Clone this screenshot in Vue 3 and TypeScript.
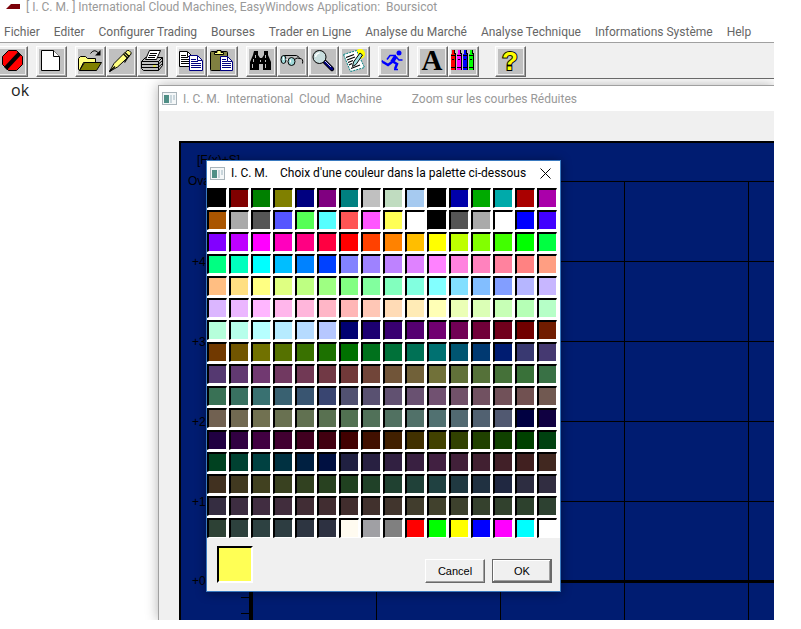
<script setup lang="ts">
import { ref } from 'vue'

const menus: string[] = [
  'Fichier',
  'Editer',
  'Configurer Trading',
  'Bourses',
  'Trader en Ligne',
  'Analyse du Marché',
  'Analyse Technique',
  'Informations Système',
  'Help',
]

interface Tool {
  id: string
  label: string
}

const toolGroups: Tool[][] = [
  [{ id: 'stop', label: 'Stop' }],
  [{ id: 'new', label: 'Nouveau' }],
  [
    { id: 'open', label: 'Ouvrir' },
    { id: 'pen', label: 'Editer' },
    { id: 'print', label: 'Imprimer' },
  ],
  [
    { id: 'copy', label: 'Copier' },
    { id: 'paste', label: 'Coller' },
  ],
  [
    { id: 'find', label: 'Rechercher' },
    { id: 'glasses', label: 'Lire' },
    { id: 'zoom', label: 'Zoom' },
    { id: 'note', label: 'Notes' },
  ],
  [{ id: 'run', label: 'Lancer' }],
  [
    { id: 'font', label: 'Police' },
    { id: 'colors', label: 'Couleurs' },
  ],
  [{ id: 'help', label: 'Aide' }],
]

const palette: string[] = `
000000 800000 008000 808000 000080 800080 008080 c0c0c0 c0dcc0 a6caf0 000000 0000aa 00aa00 00aaaa aa0000 aa00aa
aa5500 aaaaaa 555555 5555ff 55ff55 55ffff ff5555 ff55ff ffff55 ffffff 000000 555555 aaaaaa ffffff 0000ff 4100ff
8200ff be00ff ff00ff ff00be ff0082 ff0041 ff0000 ff4100 ff8200 ffbe00 ffff00 beff00 82ff00 41ff00 00ff00 00ff41
00ff82 00ffbe 00ffff 00beff 0082ff 0041ff 8282ff 9e82ff be82ff df82ff ff82ff ff82df ff82be ff829e ff8282 ff9e82
ffbe82 ffdf82 ffff82 dfff82 beff82 9eff82 82ff82 82ff9e 82ffbe 82ffdf 82ffff 82dfff 82beff 829eff b6b6ff c7b6ff
dbb6ff ebb6ff ffb6ff ffb6eb ffb6db ffb6c7 ffb6b6 ffc7b6 ffdbb6 ffebb6 ffffb6 ebffb6 dbffb6 c7ffb6 b6ffb6 b6ffc7
b6ffdb b6ffeb b6ffff b6ebff b6dbff b6c7ff 000071 1c0071 390071 550071 710071 710055 710039 71001c 710000 711c00
713900 715500 717100 557100 397100 1c7100 007100 00711c 007139 007155 007171 005571 003971 001c71 393971 453971
553971 613971 713971 713961 713955 713945 713939 714539 715539 716139 717139 617139 557139 457139 397139 397145
397155 397161 397171 396171 395571 394571 515171 595171 615171 695171 715171 715169 715161 715159 715151 715951
716151 716951 717151 697151 617151 597151 517151 517159 517161 517169 517171 516971 516171 515971 000041 100041
200041 310041 410041 410031 410020 410010 410000 411000 412000 413100 414100 314100 204100 104100 004100 004110
004120 004131 004141 003141 002041 001041 202041 282041 312041 392041 412041 412039 412031 412028 412020 412820
413120 413920 414120 394120 314120 284120 204120 204128 204131 204139 204141 203941 203141 202841 2d2d41 312d41
352d41 3d2d41 412d41 412d3d 412d35 412d31 412d2d 41312d 41352d 413d2d 41412d 3d412d 35412d 31412d 2d412d 2d4131
2d4135 2d413d 2d4141 2d3d41 2d3541 2d3141 fffbf0 a0a0a4 808080 ff0000 00ff00 ffff00 0000ff ff00ff 00ffff ffffff
`
  .trim()
  .split(/\s+/)
  .map((hex) => `#${hex}`)

const selected = ref('#ffff55')
const dialogOpen = ref(true)

const rowStep = 80
const columnStep = 124
const rows = [4, 3, 2, 1]
const columns = Array.from({ length: 16 }, (_, i) => 195 + i * columnStep)
const crayons = [
  { x: 0, fill: '#ff0000' },
  { x: 6, fill: '#ff00ff' },
  { x: 12, fill: '#0000ff' },
  { x: 18, fill: '#00ff00' },
]
</script>

<template>
  <div class="page">
    <main class="app">
      <header class="app-title">
        <svg class="app-logo" width="16" height="8" viewBox="0 0 16 8" aria-hidden="true">
          <path d="M0 6 L5 1 H14 V6 Z" fill="#7b0008" />
        </svg>
        <h1>[ I. C. M. ] International Cloud Machines, EasyWindows Application:&nbsp; Boursicot</h1>
      </header>

      <nav class="menu">
        <button v-for="menu in menus" :key="menu" type="button">{{ menu }}</button>
      </nav>

      <div class="toolbar" role="toolbar">
        <div v-for="(group, g) in toolGroups" :key="g" class="tool-group">
          <button v-for="tool in group" :key="tool.id" type="button" class="tool" :aria-label="tool.label">
            <svg width="25" height="25" viewBox="0 0 25 25" aria-hidden="true">
              <g v-if="tool.id === 'stop'">
                <path d="M8.500 1.500 H16.500 L22.500 7.500 V15.500 L16.500 21.500 H8.500 L2.500 15.500 V7.500 Z" fill="#f00" stroke="#000" />
                <path d="M4 18 L18 3 L21 6 L7 21 Z" fill="#000" />
              </g>
              <g v-else-if="tool.id === 'new'">
                <path d="M2.500 1.500 H14.500 L20.500 7.500 V21.500 H2.500 Z" fill="#fff" stroke="#000" />
                <path d="M14.500 1.500 V7.500 H20.500" fill="#fff" stroke="#000" />
              </g>
              <g v-else-if="tool.id === 'open'">
                <path d="M0.500 20.500 V9.500 L2.500 7.500 H7.500 L9.500 9.500 H17.500 V13.500 L5.500 13.500 L1.500 21.500 Z" fill="#ffff80" stroke="#000" />
                <path d="M1.500 21.500 L6.500 13.500 H23.500 L18.500 21.500 Z" fill="#808000" stroke="#000" />
                <path d="M12.500 4.500 Q16 -0.500 20 3.500" fill="none" stroke="#000" />
                <path d="M22.500 1 V6.500 H17 Z" fill="#000" />
              </g>
              <g v-else-if="tool.id === 'pen'">
                <path d="M0.500 22.500 L5 14.500 L17 2.500 Q18.500 1 20 1.500 L22 3.500 Q22.500 5 21 6.500 L8.500 18 Z" fill="#ffff80" stroke="#000" />
                <path d="M14.500 5 L18.500 9 M16 3.500 L20 7.500 M0.500 22.500 L6 17.500 M20.500 6 L15.500 13.500" stroke="#000" stroke-width="1.300" fill="none" />
              </g>
              <g v-else-if="tool.id === 'print'">
                <path d="M1.500 12.500 L5.500 8.500 H22.500 V16.500 L18.500 21.500 H3.500 L1.500 19.500 Z" fill="#c0c0c0" stroke="#000" />
                <path d="M5.500 10.500 L9.500 1.500 H20.500 L16.500 10.500 Z" fill="#fff" stroke="#000" />
                <path d="M10 4.500 H17 M9 6.500 H16 M8 8.500 H15 M1.500 12.500 H18.500 L22.500 8.500 M18.500 12.500 V21.500 M2 15.500 H18 L22.500 11.500 M2 18.500 H18 L22.500 14.500" fill="none" stroke="#000" />
                <path d="M13 17 H16" stroke="#ff0" />
              </g>
              <g v-else-if="tool.id === 'copy'">
                <path d="M0.500 2.500 H8.500 L13.500 7.500 V17.500 H0.500 Z" fill="#fff" stroke="#000" />
                <path d="M2 6.500 H7 M2 8.500 H9 M2 10.500 H11 M2 12.500 H11 M2 14.500 H11 M8.500 3 V7.500 H13" fill="none" stroke="#000" />
                <path d="M10.500 6.500 H18.500 L23.500 11.500 V21.500 H10.500 Z" fill="#fff" stroke="#000080" />
                <path d="M12 10.500 H17 M12 12.500 H19 M12 14.500 H22 M12 16.500 H22 M12 18.500 H22 M18.500 7 V11.500 H23" fill="none" stroke="#000080" />
              </g>
              <g v-else-if="tool.id === 'paste'">
                <rect x="0.500" y="2.500" width="17" height="19" rx="1" fill="#808040" stroke="#000" />
                <path d="M4.500 5.500 V3.500 H7 V1.500 H11 V3.500 H13.500 V5.500 Z" fill="#ffff80" stroke="#000" />
                <path d="M10.500 7.500 H17.500 L22.500 12.500 V21.500 H10.500 Z" fill="#fff" stroke="#000080" />
                <path d="M12 10.500 H16 M12 12.500 H17 M12 14.500 H21 M12 16.500 H21 M12 18.500 H21 M17.500 8 V12.500 H22" fill="none" stroke="#000080" />
              </g>
              <g v-else-if="tool.id === 'find'">
                <path d="M5 2 H9 V6 L11 9 H13 L15 6 V2 H19 V6 L22 13 V21 H14 V15 H10 V21 H1 V13 L4 6 Z" fill="#000" />
                <path d="M6.500 6 V9 M4.500 10 V13 M3.500 15 V19 M16.500 6 V9 M16.500 11 V13 M16.500 15 V19 M11.500 11 V13" stroke="#c0c0c0" />
              </g>
              <g v-else-if="tool.id === 'glasses'">
                <path d="M3.500 6.500 H16.500 L19.500 8.500 M14.500 10.500 Q17 8 20 9.500 Q23.500 9.500 22.500 14.500" fill="none" stroke="#000" />
                <ellipse cx="3.500" cy="10.500" rx="2.500" ry="4" fill="#9fd8d8" stroke="#000" />
                <ellipse cx="11.500" cy="12.500" rx="3.500" ry="4" fill="#9fd8d8" stroke="#000" />
                <path d="M6 10 L8 11 M3.500 8 V11 M10.500 10.500 V13.500" stroke="#fff" />
              </g>
              <g v-else-if="tool.id === 'zoom'">
                <path d="M13 12 L21 20" stroke="#000" stroke-width="4.500" stroke-linecap="round" />
                <path d="M14 13 L21 20" stroke="#000080" stroke-width="2.500" stroke-linecap="round" />
                <path d="M14 12 L20 18" stroke="#fff" stroke-width="0.800" />
                <circle cx="8.500" cy="8" r="6.500" fill="#c8dede" stroke="#000" />
                <path d="M4.500 8 Q5 4.500 8.500 4" fill="none" stroke="#fff" stroke-width="1.500" />
              </g>
              <g v-else-if="tool.id === 'note'">
                <circle cx="18" cy="5" r="5" fill="#ff0" />
                <path d="M1.500 5.500 L14.500 1.500 L22.500 18.500 L8.500 22.500 Z" fill="#fff" stroke="#008080" stroke-dasharray="2 1" />
                <path d="M4 8.500 L12 5.500 M5 11 L13 8 M6 13.500 L11 11.500 M7 16 L10 14.500 M9 19.500 L18 16" stroke="#000" stroke-width="1.200" />
                <path d="M17 1 L20 0.500 Q23 2 22.500 6 L19 9 L16 5 Z" fill="#ff0" />
                <path d="M10.500 17.500 L11.500 13 L18 4 L20.500 6 L14 15.500 Z" fill="#a0e0e0" stroke="#000" />
              </g>
              <g v-else-if="tool.id === 'run'" fill="none" stroke="#00f">
                <circle cx="18" cy="4" r="2.500" fill="#00f" stroke="none" />
                <path d="M15 7 L11 13" stroke-width="4" />
                <path d="M11 13 L7 16 L2 13 M11 12 L16 15 L14 20" stroke-width="2.500" />
                <path d="M15 6.500 H9 L6 10.500 M15 8 L18 11 H21.500 M2.500 14 L1 11.500 M13 20.500 L17 20.500" stroke-width="1.500" />
              </g>
              <text v-else-if="tool.id === 'font'" class="glyph-font" x="12" y="21" text-anchor="middle">A</text>
              <g v-else-if="tool.id === 'colors'">
                <g v-for="crayon in crayons" :key="crayon.x">
                  <path :d="`M${crayon.x + 1} 1 H${crayon.x + 4} V4 H${crayon.x + 5} V21 H${crayon.x + 1} Z`" fill="#000" />
                  <path :d="`M${crayon.x} 5 H${crayon.x + 4} V21 H${crayon.x} Z M${crayon.x + 1} 1 H${crayon.x + 3} V5 H${crayon.x + 1} Z`" :fill="crayon.fill" />
                  <path :d="`M${crayon.x} 6.500 H${crayon.x + 4} M${crayon.x + 1} 10.500 H${crayon.x + 3} M${crayon.x} 18.500 H${crayon.x + 4}`" stroke="#000" />
                </g>
              </g>
              <text v-else class="glyph-help" x="12" y="21" text-anchor="middle">?</text>
            </svg>
          </button>
        </div>
      </div>

      <div class="workspace">
        <p class="console">ok</p>

        <section class="child">
          <header class="child-title">
            <svg width="15" height="13" viewBox="0 0 15 13" aria-hidden="true">
              <rect x="0.500" y="0.500" width="14" height="12" fill="#f4f7f8" stroke="#a9b4ba" />
              <rect x="2" y="3" width="5" height="8" fill="#4f8f86" />
              <rect x="8" y="3" width="2" height="8" fill="#c9d6dc" />
              <rect x="11" y="3" width="2" height="5" fill="#c9d6dc" />
            </svg>
            <h2>I. C. M.&nbsp; International&nbsp; Cloud&nbsp; Machine</h2>
            <h2 class="child-subtitle">Zoom sur les courbes Réduites</h2>
          </header>

          <div class="chart">
            <svg class="plot" aria-hidden="true">
              <text x="16" y="21">[F(x)+S]</text>
              <text x="7" y="42">Oval</text>
              <line x1="68" x2="100%" y1="38.500" y2="38.500" />
              <g v-for="(row, i) in rows" :key="row">
                <line x1="68" x2="100%" :y1="118.5 + i * rowStep" :y2="118.5 + i * rowStep" />
                <text x="11" :y="123 + i * rowStep">+{{ row }}</text>
              </g>
              <text x="11" y="442">+0</text>
              <line v-for="x in columns" :key="x" :x1="x + 0.5" :x2="x + 0.5" y1="38" y2="100%" />
              <line x1="68" x2="100%" y1="438.500" y2="438.500" stroke-width="3" />
              <line x1="70" x2="70" y1="38" y2="100%" stroke-width="4" />
              <line x1="60" x2="68" y1="454.500" y2="454.500" />
              <line x1="60" x2="68" y1="470.500" y2="470.500" />
            </svg>
          </div>

          <div v-if="dialogOpen" class="dialog" role="dialog" aria-labelledby="dialog-title">
            <header class="dialog-title">
              <svg width="15" height="13" viewBox="0 0 15 13" aria-hidden="true">
                <rect x="0.500" y="0.500" width="14" height="12" fill="#f4f7f8" stroke="#a9b4ba" />
                <rect x="2" y="3" width="5" height="8" fill="#4f8f86" />
                <rect x="8" y="3" width="2" height="8" fill="#c9d6dc" />
                <rect x="11" y="3" width="2" height="5" fill="#c9d6dc" />
              </svg>
              <span>I. C. M.</span>
              <h2 id="dialog-title">Choix d'une couleur dans la palette ci-dessous</h2>
              <button type="button" class="close" aria-label="Fermer" @click="dialogOpen = false">
                <svg width="11" height="11" viewBox="0 0 11 11" aria-hidden="true">
                  <path d="M0.500 0.500 L10.500 10.500 M10.500 0.500 L0.500 10.500" stroke="#000" />
                </svg>
              </button>
            </header>

            <div class="palette">
              <button
                v-for="(color, i) in palette"
                :key="i"
                type="button"
                class="swatch"
                :aria-label="color"
                :style="{ backgroundColor: color }"
                @click="selected = color"
              ></button>
            </div>

            <footer class="dialog-footer">
              <div class="current" :style="{ backgroundColor: selected }"></div>
              <button type="button" class="push" @click="dialogOpen = false">Cancel</button>
              <button type="button" class="push push-default" @click="dialogOpen = false">OK</button>
            </footer>
          </div>
        </section>
      </div>
    </main>
  </div>
</template>

<style>
body {
  background: #fff;
}
</style>

<style scoped>
.page {
  display: flex;
  box-sizing: border-box;
  min-height: 100vh;
  padding: 0 27px 9px 0;
  font-family: Roboto, "Open Sans", sans-serif;
  font-size: 12px;
  line-height: 14px;
}

.app {
  display: flex;
  flex: 1;
  flex-direction: column;
  min-width: 0;
}

button {
  margin: 0;
  padding: 0;
  border: 0;
  background: none;
  font: inherit;
  color: inherit;
}

h1,
h2 {
  margin: 0;
  font-size: inherit;
  font-weight: 400;
  white-space: nowrap;
}

.app-title {
  display: flex;
  align-items: center;
  gap: 4px;
  height: 14px;
  padding-left: 6px;
  color: #999;
}

.menu {
  display: flex;
  align-items: center;
  gap: 14px;
  box-sizing: border-box;
  height: 28px;
  padding: 8px 4px 0;
  color: #666;
  white-space: nowrap;
}

.toolbar {
  display: flex;
  gap: 8px;
  box-sizing: border-box;
  height: 37px;
  padding-top: 3px;
  border-top: 1px solid #a0a0a0;
  border-bottom: 1px solid #696969;
  background: #f0f0f0;
}

.tool-group {
  display: flex;
}

.tool-group:first-child {
  margin-left: -3px;
}

.tool-group:last-child {
  margin-left: 8px;
}

.tool {
  box-sizing: border-box;
  width: 31px;
  height: 31px;
  padding: 2px;
  border: 1px solid;
  border-color: #fff #696969 #696969 #fff;
  box-shadow: inset -1px -1px #a0a0a0;
  background: #f0f0f0;
}

.tool svg {
  display: block;
  overflow: visible;
  background: #c0c0c0;
}

.glyph-font {
  font: bold 29px "Liberation Serif", serif;
}

.glyph-help {
  font: bold 26px "Liberation Sans", sans-serif;
  fill: #ff0;
  stroke: #000;
  stroke-width: 2px;
  paint-order: stroke;
}

.workspace {
  display: grid;
  flex: 1;
  grid-template-columns: 158px 1fr;
  overflow: hidden;
}

.console {
  margin: 0;
  padding: 0 11px;
  font-family: "Open Sans", "Noto Sans", sans-serif;
  font-size: 16px;
  line-height: 22px;
  color: #222;
}

.child {
  position: relative;
  display: flex;
  flex-direction: column;
  min-width: 0;
  margin-top: 6px;
  border-top: 1px solid #a0a0a0;
  border-left: 1px solid #a0a0a0;
  background: #f0f0f0;
  box-shadow: 0 0 12px rgba(0, 0, 0, 0.3);
}

.child-title {
  display: flex;
  align-items: center;
  gap: 6px;
  height: 25px;
  padding-left: 3px;
  background: #fff;
  color: #999;
}

.child-subtitle {
  margin-left: 24px;
}

.chart {
  position: relative;
  flex: 1;
  min-height: 460px;
  margin: 30px 0 0 20px;
  border-top: 2px solid #000;
  border-left: 2px solid #000;
  background: #001c71;
}

.plot {
  position: absolute;
  inset: 0;
  width: 100%;
  height: 100%;
}

.plot line {
  stroke: #000;
}

.plot text {
  font: 12px "Liberation Sans", sans-serif;
  fill: #000;
}

.dialog {
  position: absolute;
  top: 74px;
  left: 47px;
  border: 1px solid #3a7ac0;
  background: #f0f0f0;
  box-shadow: 0 1px 10px rgba(0, 0, 0, 0.4);
  color: #000;
}

.dialog-title {
  display: flex;
  align-items: center;
  gap: 6px;
  height: 24px;
  padding: 0 9px 3px 3px;
  background: #fff;
}

.dialog-title h2 {
  margin-left: 6px;
}

.close {
  margin-left: auto;
}

.close svg {
  display: block;
}

.palette {
  display: grid;
  grid-template-columns: repeat(16, 20px);
  gap: 2px;
  padding-right: 3px;
  background: #fff;
}

.swatch {
  box-sizing: border-box;
  height: 20px;
  border: solid;
  border-width: 2px 1px 1px 2px;
  border-color: #000 #fff #fff #000;
}

.dialog-footer {
  display: flex;
  align-items: flex-end;
  gap: 7px;
  padding: 8px 8px 8px 10px;
}

.current {
  box-sizing: border-box;
  width: 36px;
  height: 37px;
  margin-right: auto;
  border: 2px solid;
  border-color: #000 #fff #fff #000;
}

.push {
  box-sizing: border-box;
  width: 60px;
  height: 24px;
  border: 1px solid;
  border-color: #fff #696969 #696969 #fff;
  box-shadow: inset -1px -1px #a0a0a0;
  font: 11px "Liberation Sans", sans-serif;
}

.push-default {
  border-color: #696969;
  box-shadow: inset -1px -1px #696969, inset 1px 1px #fff, inset -2px -2px #a0a0a0;
}
</style>
